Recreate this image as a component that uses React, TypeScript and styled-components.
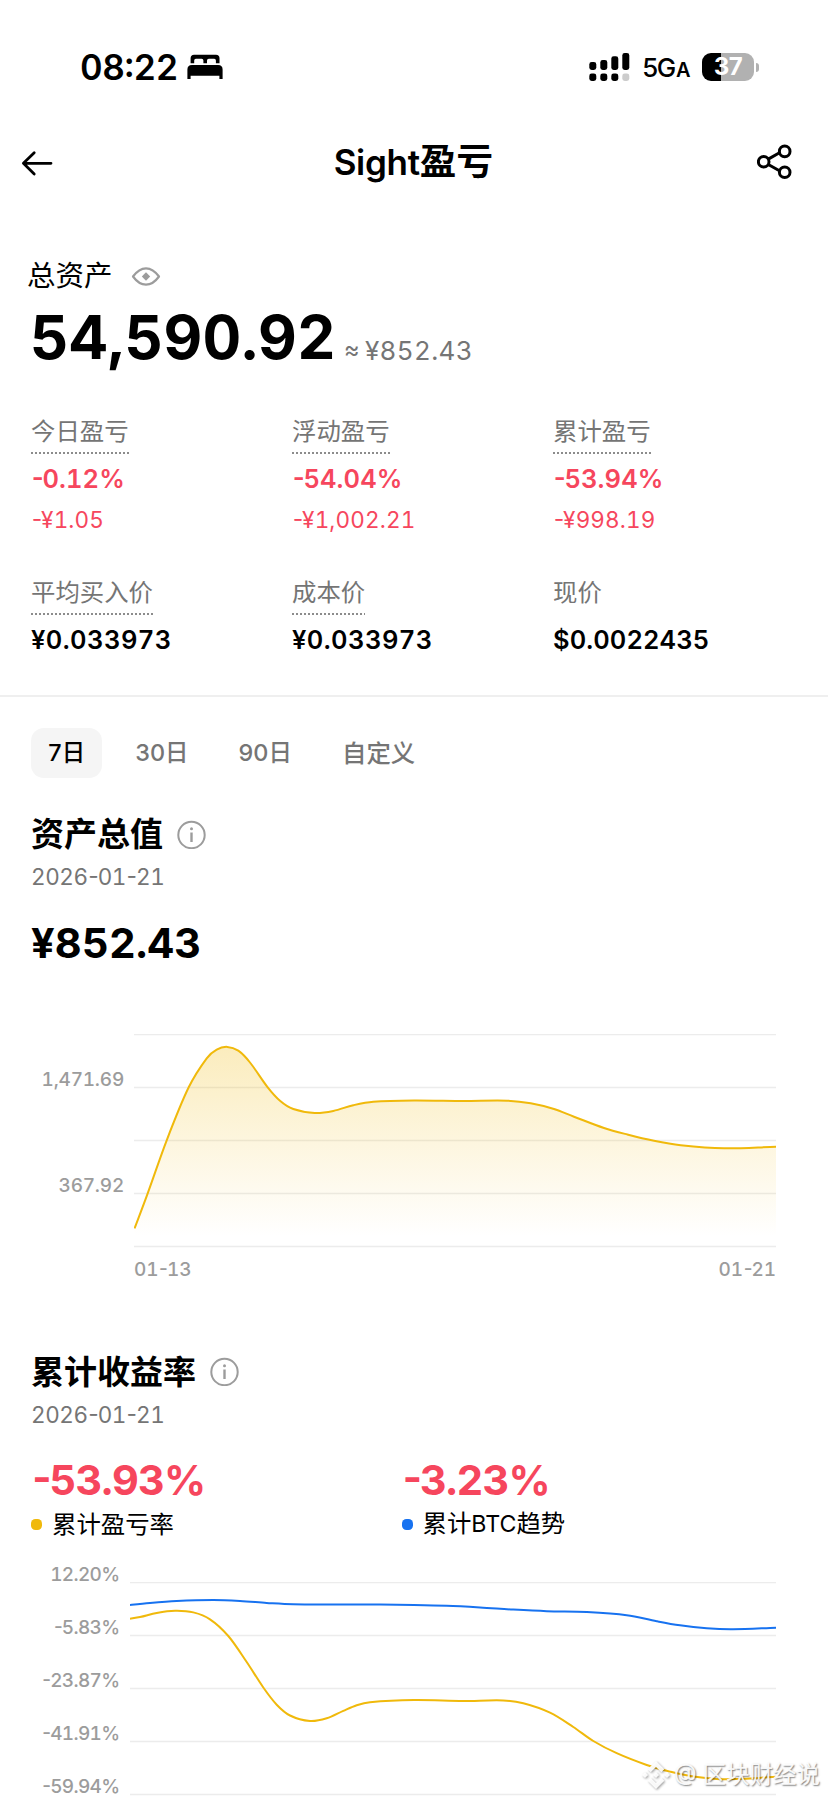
import React from 'react';
import styled, { createGlobalStyle } from 'styled-components';

const red = '#f6465d';
const yellow = '#f0b90b';
const blue = '#1772f0';
const muted = '#757575';
const faint = '#9c9c9c';

const GlobalStyle = createGlobalStyle`
  *, *::before, *::after { box-sizing: border-box; }
  body {
    margin: 0;
    background: #fff;
    color: #000;
    font-family: Inter, "Noto Sans CJK SC", sans-serif;
    font-feature-settings: "tnum", "case";
    white-space: nowrap;
  }
  svg { display: block; flex: none; }
`;

const Screen = styled.main`
  position: relative;
  width: 828px;
  height: 1801px;
  overflow: hidden;
  background: #fff;
`;

/* ---------- status bar ---------- */

const StatusBar = styled.div`
  display: flex;
  align-items: flex-start;
  justify-content: space-between;
  height: 121px;
  padding: 13px 69px 0 80px;
`;

const StatusGroup = styled.div`
  display: flex;
  align-items: center;
  height: 108px;
`;

const Clock = styled.span`
  width: 107px;
  font-size: 35px;
  font-weight: 600;
  line-height: 40px;
  letter-spacing: -0.4px;
`;

const NetworkType = styled.span`
  width: 61px;
  padding-left: 1px;
  margin-left: 11.5px;
  margin-top: 3px;
  font-size: 26px;
  font-weight: 500;
  line-height: 30px;
  letter-spacing: -2.2px;
`;

const SmallCap = styled.span`
  margin-left: 2px;
  font-size: 20px;
  font-weight: 600;
`;

const Battery = styled.div`
  display: flex;
  align-items: center;
  justify-content: center;
  width: 52px;
  height: 28px;
  border-radius: 9px;
  background: linear-gradient(90deg, #000 19px, #b1b1b1 19px);
  color: #fff;
  font-size: 24px;
  font-weight: 700;
  line-height: 28px;
  letter-spacing: -1.5px;
`;

const BatteryTip = styled.div`
  width: 3px;
  height: 9px;
  margin-left: 2px;
  border-radius: 0 4px 4px 0;
  background: #b1b1b1;
`;

/* ---------- page header ---------- */

const Header = styled.header`
  display: grid;
  grid-template-columns: 40px 1fr 40px;
  align-items: center;
  height: 81px;
  padding: 0 31px 0 20px;
`;

const PageTitle = styled.h1`
  margin: 0;
  padding: 0 2px 0 12px;
  text-align: center;
  font-size: 35px;
  font-weight: 600;
  line-height: 44px;
  letter-spacing: -0.3px;
`;

const TitleCjk = styled.span`
  font-size: 36.5px;
  letter-spacing: 0.3px;
`;

/* ---------- summary ---------- */

const Summary = styled.section`
  height: 495px;
  padding: 54px 0 0 31px;
  border-bottom: 2px solid #efefef;
`;

const AssetsLabel = styled.div`
  display: flex;
  align-items: center;
  gap: 18px;
  height: 40px;
  margin-left: -4px;
  font-size: 28.5px;
  line-height: 40px;
`;

const Balance = styled.div`
  display: flex;
  align-items: baseline;
  height: 72px;
  margin: 5px 0 44px -1px;
  font-size: 60px;
  font-weight: 700;
  line-height: 72px;
  letter-spacing: 0.25px;
`;

const Converted = styled.span`
  position: relative;
  top: 1px;
  margin-left: 8px;
  color: ${muted};
  font-size: 26px;
  font-weight: 400;
  letter-spacing: 0.35px;
`;

const Approx = styled.span`
  margin-right: 5px;
  font-size: 24px;
`;

const Stats = styled.div`
  display: grid;
  grid-template-columns: repeat(3, 261px);
  row-gap: 43px;
`;

const Stat = styled.div`
  display: flex;
  flex-direction: column;
  align-items: flex-start;
`;

const StatLabel = styled.div<{ $hint?: boolean }>`
  height: 37px;
  color: ${muted};
  font-size: 24.4px;
  line-height: 29px;
  background: ${p =>
    p.$hint
      ? 'linear-gradient(90deg, #8c8c8c 50%, transparent 50%) 0 35px / 4px 1.5px repeat-x'
      : 'none'};
`;

const StatValue = styled.div<{ $loss?: boolean; $tight?: boolean }>`
  margin-top: 10px;
  color: ${p => (p.$loss ? red : '#000')};
  font-size: 25.5px;
  font-weight: 600;
  line-height: 30px;
  letter-spacing: ${p => (p.$loss || p.$tight ? '0.1px' : '0.45px')};
`;

const StatAmount = styled.div`
  margin-top: 11px;
  color: ${red};
  font-size: 22.5px;
  line-height: 30px;
  letter-spacing: 0.15px;
`;

/* ---------- range tabs ---------- */

const Tabs = styled.nav`
  display: flex;
  gap: 15.6px;
  height: 50px;
  margin: 31px 0 0 31px;
`;

const Tab = styled.button<{ $active?: boolean; $cjk?: boolean }>`
  height: 50px;
  padding: 0 17.3px;
  border: 0;
  border-radius: 13px;
  background: ${p => (p.$active ? '#f5f5f5' : 'transparent')};
  color: ${p => (p.$active ? '#000' : muted)};
  font: 500 ${p => (p.$cjk ? 24.4 : 23.4)}px/50px Inter, "Noto Sans CJK SC", sans-serif;
  letter-spacing: 0;
`;

/* ---------- chart sections ---------- */

const Section = styled.section<{ $top: number }>`
  padding: ${p => p.$top}px 0 0 31px;
`;

const SectionTitle = styled.h2`
  display: flex;
  align-items: center;
  gap: 14px;
  height: 44px;
  margin: 0;
  font-size: 33px;
  font-weight: 700;
  line-height: 44px;
`;

const DateLine = styled.div`
  margin-top: 5.6px;
  color: ${muted};
  font-size: 22.5px;
  line-height: 30px;
  letter-spacing: -0.45px;
`;

const BigValue = styled.div<{ $loss?: boolean }>`
  color: ${p => (p.$loss ? red : '#000')};
  font-size: 41.5px;
  font-weight: 700;
  line-height: 50px;
  letter-spacing: ${p => (p.$loss ? '-0.8px' : '0.2px')};
`;

const ValueBlock = styled.div`
  margin-top: 26.4px;
`;

const Legends = styled.div`
  display: grid;
  grid-template-columns: 370.5px 1fr;
  margin-top: 25.4px;
`;

const LegendLabel = styled.div`
  display: flex;
  align-items: center;
  gap: 10px;
  height: 34px;
  margin-top: 2px;
  font-size: 24.4px;
  line-height: 34px;
`;

const Dot = styled.i<{ $color: string }>`
  width: 11px;
  height: 11px;
  border-radius: 4.5px;
  margin-top: 2px;
  background: ${p => p.$color};
`;

const LegendLatin = styled.span`
  font-size: 23.2px;
`;

const ChartGrid = styled.div<{ $axis: number; $top: number }>`
  display: grid;
  grid-template-columns: ${p => p.$axis}px auto;
  margin: ${p => p.$top}px 0 0 -31px;
`;

const AxisY = styled.div<{ $top: number; $gap: number; $percent?: boolean }>`
  display: flex;
  flex-direction: column;
  align-items: flex-end;
  gap: ${p => p.$gap}px;
  height: 0;
  padding: ${p => p.$top}px ${p => (p.$percent ? 10.5 : 10)}px 0 0;
  color: ${faint};
  font-size: 19px;
  font-weight: 500;
  line-height: 16px;
  letter-spacing: ${p => (p.$percent ? '-0.65px' : '-0.2px')};
`;

const AxisX = styled.div`
  display: flex;
  justify-content: space-between;
  width: 642px;
  margin-top: 12px;
  color: ${faint};
  font-size: 19px;
  font-weight: 500;
  line-height: 20px;
  letter-spacing: -0.1px;
`;

const Plot = styled.div<{ $top?: number }>`
  padding-top: ${p => p.$top ?? 0}px;
`;

const Hyphen = styled.span`
  margin-left: -0.06em;
  letter-spacing: -0.14em;
`;

const Watermark = styled.div`
  position: absolute;
  top: 1757px;
  left: 641px;
  display: flex;
  align-items: center;
  gap: 3px;
  height: 36px;
  color: rgba(255, 255, 255, 0.92);
  font-size: 23.4px;
  line-height: 36px;
  text-shadow: 1px 1px 1.5px rgba(0, 0, 0, 0.5);
  svg { filter: drop-shadow(1px 1px 1px rgba(0, 0, 0, 0.4)); }
`;

/* ---------- helpers ---------- */

/** Renders a figure with its hyphens set closer to the digits. */
function Figure({ value }: { value: string }) {
  return (
    <>
      {value.split(/(-)/).filter(Boolean).map((part, i) =>
        part === '-' ? <Hyphen key={i}>-</Hyphen> : <React.Fragment key={i}>{part}</React.Fragment>,
      )}
    </>
  );
}

type Point = [number, number];

/** Smooth Catmull-Rom curve through the points. */
function smooth(points: Point[]): string {
  let d = `M${points[0][0]} ${points[0][1]}`;
  for (let i = 0; i < points.length - 1; i++) {
    const p0 = points[Math.max(i - 1, 0)];
    const p1 = points[i];
    const p2 = points[i + 1];
    const p3 = points[Math.min(i + 2, points.length - 1)];
    const k = (p2[0] - p1[0]) / 3;
    const m1 = (p2[1] - p0[1]) / (p2[0] - p0[0]);
    const m2 = (p3[1] - p1[1]) / (p3[0] - p1[0]);
    d += `C${(p1[0] + k).toFixed(1)} ${(p1[1] + m1 * k).toFixed(1)} ${(p2[0] - k).toFixed(1)} ${(p2[1] - m2 * k).toFixed(1)} ${p2[0]} ${p2[1]}`;
  }
  return d;
}

const assetCurve: Point[] = [
  [134.5, 1228.5], [147.7, 1193.3], [166.7, 1140.3], [188.7, 1087.3], [206.7, 1058.3], [216.7, 1049.6],
  [227.3, 1046.9], [238.3, 1050.7], [250, 1062.5], [267.7, 1087.3], [280, 1100.7], [293.3, 1109],
  [314.7, 1113], [333.3, 1110.9], [353.3, 1105.2], [373.3, 1101.7], [414, 1100.4], [464, 1101],
  [507.3, 1100.7], [530.7, 1103.3], [554, 1109], [574, 1116.7], [604, 1128], [627.3, 1134.5],
  [654, 1140.8], [680.7, 1145.3], [724, 1148.3], [776, 1146.7],
];

const btcCurve: Point[] = [
  [130, 1605], [150, 1603], [176.7, 1601], [213.3, 1600], [240, 1601], [266.7, 1603], [293.3, 1604.3],
  [333, 1604.5], [380, 1604.6], [414, 1605], [446.7, 1605.8], [480, 1607.4], [513.3, 1609.6],
  [546.7, 1611.2], [586.7, 1612.1], [626.7, 1615.2], [656.7, 1621.2], [680, 1625.3], [706.7, 1628.3],
  [733, 1629.2], [776, 1627.7],
];

const profitCurve: Point[] = [
  [130, 1618.7], [140, 1617.1], [156.7, 1613], [175, 1610.8], [193.3, 1612.4], [210, 1619.3],
  [228.3, 1636], [246.7, 1662], [263.3, 1687.5], [276.7, 1704.7], [290, 1715.5], [310, 1721],
  [326.7, 1718.3], [343.3, 1710.9], [356.7, 1705.2], [370, 1702.2], [414, 1700.1], [463.3, 1701],
  [503.3, 1700.4], [523.3, 1703.3], [550, 1712.7], [573.3, 1727], [593.3, 1741], [616.7, 1753.2],
  [646.7, 1765], [670, 1771.6], [693.3, 1776.6], [716.7, 1779], [746.7, 1778.7], [776, 1776.7],
];

const lineIndexes = [0, 1, 2, 3, 4];

function GridLines({ x, y }: { x: number; y: number }) {
  return (
    <>
      {lineIndexes.map(i => (
        <line key={i} x1={x} x2={776} y1={y + i * 53} y2={y + i * 53} stroke="#ececec" strokeWidth="1.3" />
      ))}
    </>
  );
}

/* ---------- icons ---------- */

const BedIcon = () => (
  <svg width="36" height="26" viewBox="0 0 36 26">
    <path d="M3.6 9.2V4.2Q3.6.7 7.1.7H29Q32.5.7 32.5 4.2V9.2H28.9V6.4Q28.9 4.7 27.2 4.7H21.8Q20 4.7 20 6.4V9.2H16.4V6.4Q16.4 4.7 14.6 4.7H8.9Q7.2 4.7 7.2 6.4V9.2Z" />
    <path d="M.4 25V15.5Q.4 11 4.9 11H31.1Q35.6 11 35.6 15.5V25H32.4V21.7H3.6V25Z" />
  </svg>
);

const SignalIcon = () => (
  <svg width="41" height="28" viewBox="0 0 41 28">
    <rect x=".3" y="9" width="7" height="8" rx="2.4" />
    <rect x="11.3" y="7" width="7" height="10" rx="2.4" />
    <rect x="22.3" y="3.3" width="7" height="13.7" rx="2.4" />
    <rect x="33.3" y="0" width="7" height="17" rx="2.4" />
    <rect x=".3" y="20.6" width="7" height="7.4" rx="2.4" />
    <rect x="11.3" y="20.6" width="7" height="7.4" rx="2.4" />
    <rect x="22.3" y="20.6" width="7" height="7.4" rx="2.4" />
    <rect x="33.3" y="20.6" width="7" height="7.4" rx="2.4" fill="#ccc" />
  </svg>
);

const BackIcon = () => (
  <svg width="34" height="30" viewBox="0 0 34 30" fill="none" stroke="#000" strokeWidth="2.8" strokeLinecap="round" strokeLinejoin="round">
    <path d="M31 16.3H3.4M14.2 5.8 3.4 16.3 14.2 26.9" />
  </svg>
);

const ShareIcon = () => (
  <svg width="38" height="36" viewBox="0 0 38 36" fill="none" stroke="#000" strokeWidth="3">
    <circle cx="6.7" cy="17.8" r="5.3" />
    <circle cx="27.7" cy="7.4" r="5.3" />
    <circle cx="27.7" cy="28.2" r="5.3" />
    <path d="M11.3 15.1 22.9 8.5M11.3 20.5 22.9 27" />
  </svg>
);

const EyeIcon = () => (
  <svg width="30" height="22" viewBox="0 0 30 22">
    <path d="M2 11.5Q8 3.3 15 3.3T28 11.5Q22 19.7 15 19.7T2 11.5Z" fill="none" stroke={faint} strokeWidth="2.2" strokeLinejoin="round" />
    <path d="m15 7.3 4.2 4.2-4.2 4.2-4.2-4.2Z" fill={faint} />
  </svg>
);

const InfoIcon = () => (
  <svg width="29" height="29" viewBox="0 0 29 29">
    <circle cx="14.5" cy="15" r="13.2" fill="none" stroke={faint} strokeWidth="2" />
    <path d="M14.5 12.5V22" stroke={faint} strokeWidth="2.4" />
    <circle cx="14.5" cy="8.7" r="1.5" fill={faint} />
  </svg>
);

const DiamondLogo = () => (
  <svg width="30" height="30" viewBox="0 0 30 30" fill="rgba(255,255,255,.92)">
    <path d="m15 1 8.300 8.300-3 3L15 7l-5.300 5.300-3-3Z" />
    <path d="m15 29 8.300-8.300-3-3L15 23l-5.300-5.300-3 3Z" />
    <path d="m15 11.900 3.100 3.100-3.100 3.100-3.100-3.100Z" />
    <path d="m4 11.900 3.100 3.100L4 18.100.9 15ZM26 11.900l3.100 3.100-3.100 3.100-3.100-3.100Z" />
  </svg>
);

/* ---------- data ---------- */

const stats = [
  { label: '今日盈亏', value: '-0.12%', amount: '-¥1.05', loss: true, hint: true },
  { label: '浮动盈亏', value: '-54.04%', amount: '-¥1,002.21', loss: true, hint: true },
  { label: '累计盈亏', value: '-53.94%', amount: '-¥998.19', loss: true, hint: true },
  { label: '平均买入价', value: '¥0.033973', hint: true },
  { label: '成本价', value: '¥0.033973', hint: true },
  { label: '现价', value: '$0.0022435' },
];

const ranges = [
  { label: '7日' },
  { label: '30日' },
  { label: '90日' },
  { label: '自定义', cjk: true },
];

export default function App() {
  return (
    <Screen>
      <GlobalStyle />
      <StatusBar>
        <StatusGroup>
          <Clock>08:22</Clock>
          <BedIcon />
        </StatusGroup>
        <StatusGroup>
          <SignalIcon />
          <NetworkType>5G<SmallCap>A</SmallCap></NetworkType>
          <Battery>37</Battery>
          <BatteryTip />
        </StatusGroup>
      </StatusBar>

      <Header>
        <BackIcon />
        <PageTitle>Sight<TitleCjk>盈亏</TitleCjk></PageTitle>
        <ShareIcon />
      </Header>

      <Summary>
        <AssetsLabel>总资产<EyeIcon /></AssetsLabel>
        <Balance>
          54,590.92
          <Converted><Approx>≈</Approx>¥852.43</Converted>
        </Balance>
        <Stats>
          {stats.map(s => (
            <Stat key={s.label}>
              <StatLabel $hint={s.hint}>{s.label}</StatLabel>
              <StatValue $loss={s.loss} $tight={s.value.startsWith('$')}><Figure value={s.value} /></StatValue>
              {s.amount && <StatAmount><Figure value={s.amount} /></StatAmount>}
            </Stat>
          ))}
        </Stats>
      </Summary>

      <Tabs>
        {ranges.map((r, i) => <Tab key={r.label} $active={i === 0} $cjk={r.cjk}>{r.label}</Tab>)}
      </Tabs>

      <Section $top={34}>
        <SectionTitle>资产总值<InfoIcon /></SectionTitle>
        <DateLine><Figure value="2026-01-21" /></DateLine>
        <ValueBlock><BigValue>¥852.43</BigValue></ValueBlock>
        <ChartGrid $axis={134} $top={66}>
          <AxisY $top={38} $gap={90}>
            <span>1,471.69</span>
            <span>367.92</span>
          </AxisY>
          <Plot>
            <svg width="642" height="214" viewBox="134 1034 642 214">
              <defs>
                <linearGradient id="assetFill" x1="0" y1="1046" x2="0" y2="1246" gradientUnits="userSpaceOnUse">
                  <stop offset="0" stopColor={yellow} stopOpacity=".27" />
                  <stop offset="0.95" stopColor={yellow} stopOpacity="0" />
                </linearGradient>
              </defs>
              <GridLines x={134} y={1034.5} />
              <path d={`${smooth(assetCurve)}V1246H134Z`} fill="url(#assetFill)" />
              <path d={smooth(assetCurve)} fill="none" stroke={yellow} strokeWidth="2" />
            </svg>
            <AxisX>
              <span><Figure value="01-13" /></span>
              <span><Figure value="01-21" /></span>
            </AxisX>
          </Plot>
        </ChartGrid>
      </Section>

      <Section $top={70}>
        <SectionTitle>累计收益率<InfoIcon /></SectionTitle>
        <DateLine><Figure value="2026-01-21" /></DateLine>
        <Legends>
          <div>
            <BigValue $loss><Figure value="-53.93%" /></BigValue>
            <LegendLabel><Dot $color={yellow} />累计盈亏率</LegendLabel>
          </div>
          <div>
            <BigValue $loss><Figure value="-3.23%" /></BigValue>
            <LegendLabel><Dot $color={blue} /><span>累计<LegendLatin>BTC</LegendLatin>趋势</span></LegendLabel>
          </div>
        </Legends>
        <ChartGrid $axis={130} $top={25}>
          <AxisY $top={1} $gap={37} $percent>
            {['12.20%', '-5.83%', '-23.87%', '-41.91%', '-59.94%'].map(v => (
              <span key={v}><Figure value={v} /></span>
            ))}
          </AxisY>
          <Plot $top={16}>
            <svg width="646" height="219" viewBox="130 1582 646 219">
              <GridLines x={130} y={1582.5} />
              <path d={smooth(profitCurve)} fill="none" stroke={yellow} strokeWidth="2" />
              <path d={smooth(btcCurve)} fill="none" stroke={blue} strokeWidth="2" />
            </svg>
          </Plot>
        </ChartGrid>
      </Section>

      <Watermark>
        <DiamondLogo />
        <span>@ 区块财经说</span>
      </Watermark>
    </Screen>
  );
}
